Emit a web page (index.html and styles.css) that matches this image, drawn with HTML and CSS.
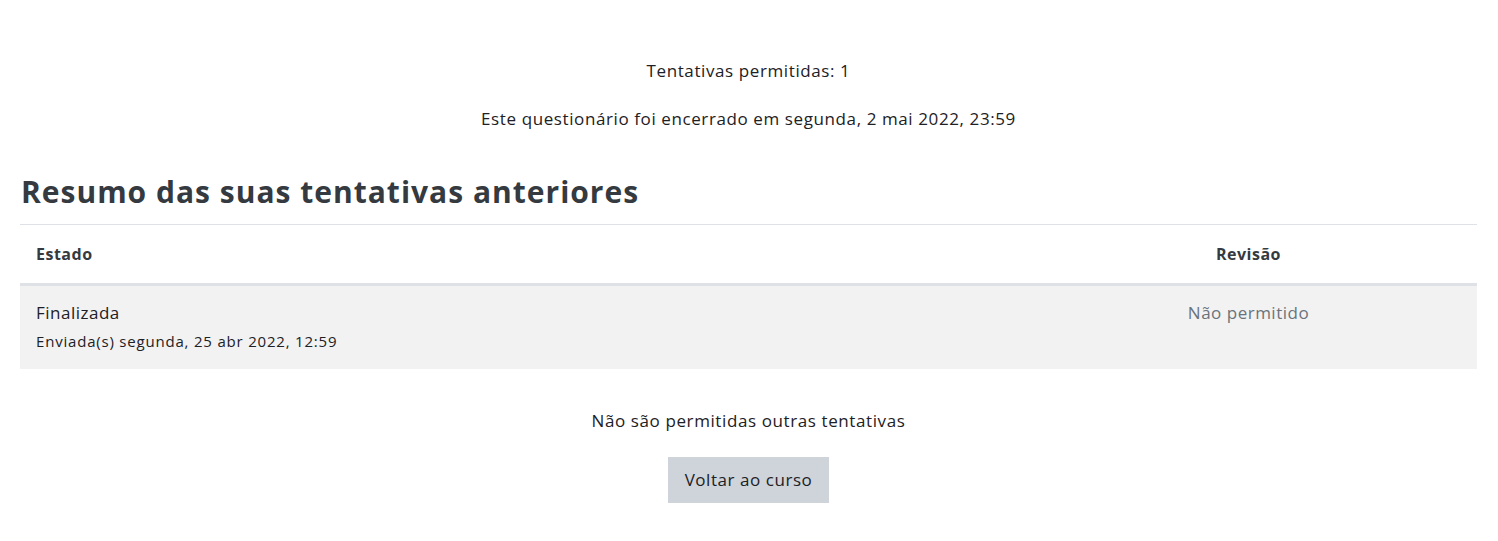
FILE: index.html
```html
<!DOCTYPE html>
<html lang="pt">
<head>
<meta charset="utf-8">
<link rel="stylesheet" href="styles.css">
</head>
<body>
<main class="page">
  <div class="info">
    <p>Tentativas permitidas: 1</p>
    <p>Este questionário foi encerrado em segunda, 2 mai 2022, 23:59</p>
  </div>
  <h3 class="title">Resumo das suas tentativas anteriores</h3>
  <table class="attempts">
    <thead>
      <tr><th class="c-state">Estado</th><th class="c-review">Revisão</th></tr>
    </thead>
    <tbody>
      <tr>
        <td class="c-state">Finalizada<span class="sub">Enviada(s) segunda, 25 abr 2022, 12:59</span></td>
        <td class="c-review muted">Não permitido</td>
      </tr>
    </tbody>
  </table>
  <div class="foot">
    <p>Não são permitidas outras tentativas</p>
    <button class="btn" type="button">Voltar ao curso</button>
  </div>
</main>
</body>
</html>
```
FILE: styles.css
```css
html, body { margin: 0; padding: 0; background: #fff; }
body {
  font-family: "Open Sans", "Liberation Sans", sans-serif;
  font-size: 17px;
  letter-spacing: 0.6px;
  color: #1d2125;
}
.page { padding: 59px 21px 0 20px; }
.info { text-align: center; }
.info p { margin: 0 0 24px; line-height: 24px; height: 24px; }
.title {
  margin: 41px 0 12px 1px;
  font-size: 30px;
  letter-spacing: 1px;
  font-weight: 700;
  color: #343a40;
  line-height: 40px;
}
.attempts { width: 100%; border-collapse: collapse; }
.attempts th, .attempts td { padding: 0 16px; text-align: left; vertical-align: top; }
.attempts thead th {
  border-top: 1px solid #dee2e6;
  border-bottom: 3px solid #dee2e6;
  height: 58px;
  vertical-align: middle;
  font-size: 16px;
  letter-spacing: 0.5px;
  font-weight: 700;
  color: #343a40;
}
.attempts tbody td {
  background: #f2f2f2;
  padding-top: 16px;
  padding-bottom: 16px;
  height: 51px;
  line-height: 22px;
  letter-spacing: 0.5px;
}
.attempts .c-review { text-align: center; width: 425px; }
.sub { display: block; font-size: 15px; letter-spacing: 0.8px; margin-top: 6px; }
.muted { color: #6a737b; }
.foot { text-align: center; padding-top: 40px; }
.foot p { margin: 0 0 24px; line-height: 24px; }
.btn {
  font: inherit;
  letter-spacing: 0.55px;
  color: #1d2125;
  background: #ced4da;
  border: 0;
  border-radius: 0;
  padding: 11px 17px;
  line-height: 24px;
}
```
